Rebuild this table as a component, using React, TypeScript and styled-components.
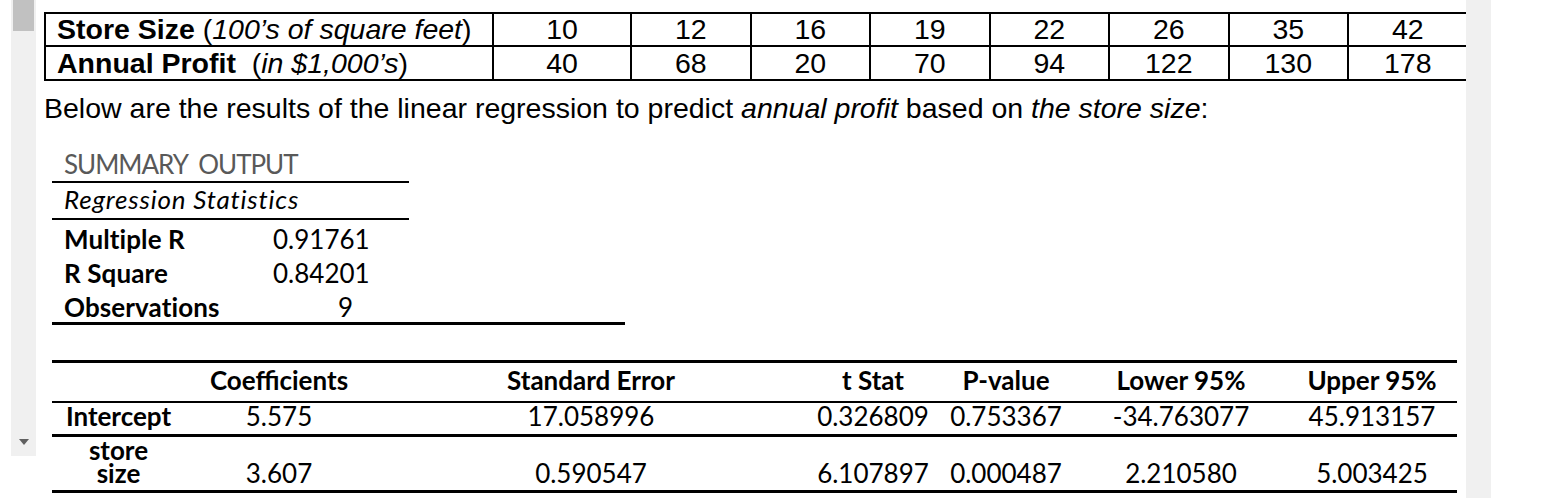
import React from "react";
import styled, { createGlobalStyle } from "styled-components";

const Global = createGlobalStyle`
  html, body { margin: 0; padding: 0; background: #ffffff; }
  body { overflow: hidden; }
  * { box-sizing: border-box; }
`;

const Page = styled.div`
  display: flex;
  align-items: flex-start;
  width: 1555px;
  height: 498px;
  background: #ffffff;
`;

const LeftTrack = styled.div`
  flex-shrink: 0;
  margin-left: 11px;
  width: 25px;
  height: 456px;
  background: #f0f0f0;
  display: flex;
  flex-direction: column;
  align-items: center;
  justify-content: space-between;
`;

const Thumb = styled.div`
  width: 21px;
  height: 31px;
  background: #c1c1c1;
`;

const ArrowDown = styled.div`
  width: 0;
  height: 0;
  border-left: 5.5px solid transparent;
  border-right: 5.5px solid transparent;
  border-top: 6px solid #606060;
  margin-bottom: 11px;
`;

const Content = styled.div`
  flex-shrink: 0;
  margin-left: 8px;
  width: 1422px;
  height: 498px;
  overflow: hidden;
  padding-top: 12px;
`;

const RightTrack = styled.div`
  flex-shrink: 0;
  width: 25px;
  height: 498px;
  background: #f0f0f0;
`;

/* ---------- top data table ---------- */
const DataGrid = styled.div`
  width: 1426px;
  border-top: 2px solid #000;
  border-left: 2px solid #000;
  font-family: "Liberation Sans", Arial, sans-serif;
  font-size: 28.5px;
  color: #000;
`;

const DataRow = styled.div<{ $h: number }>`
  display: grid;
  grid-template-columns: 448px 138px repeat(7, 119.5px);
  grid-template-rows: minmax(0, 1fr);
  height: ${(p) => p.$h}px;
`;

const DataCell = styled.div<{ $label?: boolean }>`
  border-right: 2px solid #000;
  border-bottom: 2px solid #000;
  display: flex;
  align-items: center;
  justify-content: ${(p) => (p.$label ? "flex-start" : "center")};
  padding-left: ${(p) => (p.$label ? "11px" : "0")};
  white-space: nowrap;
  line-height: 31px;
`;

const Para = styled.p`
  margin: 11px 0 0 0;
  font-family: "Liberation Sans", Arial, sans-serif;
  font-size: 28.5px;
  line-height: 32px;
  color: #000;
  white-space: nowrap;
`;

/* ---------- summary output ---------- */
const XL = `"Lato", "Open Sans", sans-serif`;

const Summary = styled.div`
  margin: 24px 0 0 8px;
  width: 573px;
  font-family: ${XL};
  font-size: 26px;
  color: #000;
`;

const SumTitle = styled.div<{ $h: number; $pb: number; $italic?: boolean; $gray?: boolean }>`
  width: 357px;
  height: ${(p) => p.$h}px;
  border-bottom: 2px solid #000;
  padding-left: 12px;
  padding-bottom: ${(p) => p.$pb}px;
  display: flex;
  align-items: flex-end;
  line-height: 34px;
  font-style: ${(p) => (p.$italic ? "italic" : "normal")};
  color: ${(p) => (p.$gray ? "#595959" : "#000")};
  letter-spacing: ${(p) => (p.$gray ? "-1px" : "0.8px")};
  white-space: pre;
`;

const StatRows = styled.div`
  border-bottom: 3px solid #000;
`;

const StatRow = styled.div`
  display: grid;
  grid-template-columns: 209px 148px 1fr;
  height: 34px;
  line-height: 34px;
  padding-top: 2px;
`;

const StatLabel = styled.div`
  padding-left: 12px;
  font-weight: 700;
  letter-spacing: 0.1px;
`;

const StatValue = styled.div<{ $indent: number }>`
  padding-left: ${(p) => p.$indent}px;
`;

/* ---------- coefficients table ---------- */
const CoefTable = styled.div`
  margin: 35px 0 0 8px;
  width: 1405px;
  border-top: 3px solid #000;
  font-family: ${XL};
  font-size: 26px;
  color: #000;
`;

const CoefRow = styled.div<{ $h: number; $border: number }>`
  display: grid;
  grid-template-columns: 133px 188px 436px 128px 138px 212px 170px;
  grid-template-rows: minmax(0, 1fr);
  height: ${(p) => p.$h}px;
  border-bottom: ${(p) => p.$border}px solid #000;
`;

const CoefCell = styled.div<{ $bold?: boolean; $pb: number; $lh?: number }>`
  display: flex;
  align-items: flex-end;
  justify-content: center;
  text-align: center;
  padding-bottom: ${(p) => p.$pb}px;
  font-weight: ${(p) => (p.$bold ? 700 : 400)};
  line-height: ${(p) => p.$lh ?? 34}px;
  white-space: nowrap;
`;

const sizes = ["10", "12", "16", "19", "22", "26", "35", "42"];
const profits = ["40", "68", "20", "70", "94", "122", "130", "178"];

const stats = [
  { label: "Multiple R", value: "0.91761", indent: 12 },
  { label: "R Square", value: "0.84201", indent: 12 },
  { label: "Observations", value: "9", indent: 77 },
];

const headers = ["", "Coefficients", "Standard Error", "t Stat", "P-value", "Lower 95%", "Upper 95%"];
const intercept = ["5.575", "17.058996", "0.326809", "0.753367", "-34.763077", "45.913157"];
const storeSize = ["3.607", "0.590547", "6.107897", "0.000487", "2.210580", "5.003425"];

export default function App() {
  return (
    <>
      <Global />
      <Page>
        <LeftTrack>
          <Thumb />
          <ArrowDown />
        </LeftTrack>
        <Content>
          <DataGrid>
            <DataRow $h={33}>
              <DataCell $label>
                <b>Store Size</b>&nbsp;(<i>100’s of square feet</i>)
              </DataCell>
              {sizes.map((s, i) => (
                <DataCell key={i}>{s}</DataCell>
              ))}
            </DataRow>
            <DataRow $h={34}>
              <DataCell $label>
                <b>Annual Profit</b>&nbsp;&nbsp;(<i>in $1,000’s</i>)
              </DataCell>
              {profits.map((s, i) => (
                <DataCell key={i}>{s}</DataCell>
              ))}
            </DataRow>
          </DataGrid>
          <Para>
            Below are the results of the linear regression to predict <i>annual profit</i> based on{" "}
            <i>the store size</i>:
          </Para>
          <Summary>
            <SumTitle $h={35} $pb={0} $gray>
              {"SUMMARY  OUTPUT"}
            </SumTitle>
            <SumTitle $h={37} $pb={2} $italic>
              Regression Statistics
            </SumTitle>
            <StatRows>
              {stats.map((s) => (
                <StatRow key={s.label}>
                  <StatLabel>{s.label}</StatLabel>
                  <StatValue $indent={s.indent}>{s.value}</StatValue>
                  <div />
                </StatRow>
              ))}
            </StatRows>
          </Summary>
          <CoefTable>
            <CoefRow $h={40} $border={2}>
              {headers.map((h, i) => (
                <CoefCell key={i} $bold $pb={4}>
                  {h}
                </CoefCell>
              ))}
            </CoefRow>
            <CoefRow $h={34} $border={3}>
              <CoefCell $bold $pb={1}>
                Intercept
              </CoefCell>
              {intercept.map((v, i) => (
                <CoefCell key={i} $pb={1}>
                  {v}
                </CoefCell>
              ))}
            </CoefRow>
            <CoefRow $h={56} $border={3}>
              <CoefCell $bold $pb={5} $lh={23}>
                store
                <br />
                size
              </CoefCell>
              {storeSize.map((v, i) => (
                <CoefCell key={i} $pb={0}>
                  {v}
                </CoefCell>
              ))}
            </CoefRow>
          </CoefTable>
        </Content>
        <RightTrack />
      </Page>
    </>
  );
}
